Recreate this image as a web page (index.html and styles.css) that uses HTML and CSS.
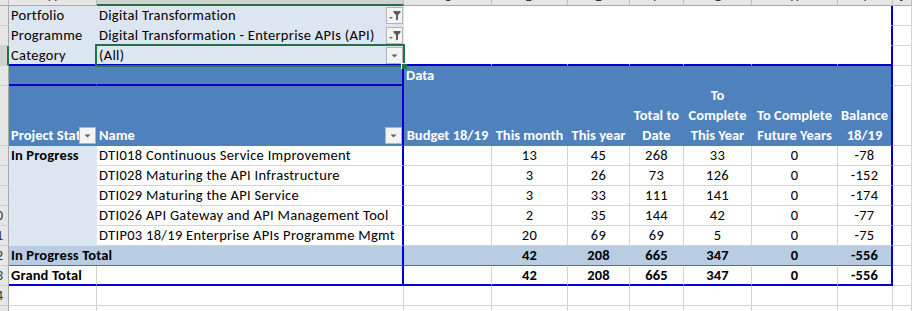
FILE: index.html
```html
<!DOCTYPE html>
<html lang="en">
<head>
    <meta charset="UTF-8">
    <meta content="width=device-width, initial-scale=1.0" name="viewport">
    <title>Enterprise APIs - Pivot</title>
    <link rel="stylesheet" href="styles.css">
</head>
<body>
<div class="sheet">
    <!-- column headings -->
    <div class="ch"></div>
    <div class="ch"><span>A</span></div>
    <div class="ch on"><span>B</span></div>
    <div class="ch"><span>C</span></div>
    <div class="ch"><span>D</span></div>
    <div class="ch"><span>E</span></div>
    <div class="ch"><span>F</span></div>
    <div class="ch"><span>G</span></div>
    <div class="ch"><span>H</span></div>
    <div class="ch"><span>I</span></div>
    <div class="ch"><span>J</span></div>

    <!-- report filters -->
    <div class="rh"><span>2</span></div>
    <div class="c flt">Portfolio</div>
    <div class="c flt pick">
        <span class="txt">Digital Transformation</span>
        <span class="btn"><svg width="15" height="15" viewBox="0 0 15 15"><polygon points="2,9 6,9 4,11" fill="#6a6a6a"/><polygon points="6.5,3 13.5,3 13.5,4.5 11,7 11,11.5 9,12.5 9,7 6.5,4.5" fill="#5c5c5c"/></svg></span>
    </div>
    <div class="c nb"></div>
    <div class="c nb"></div>
    <div class="c nb"></div>
    <div class="c nb"></div>
    <div class="c nb"></div>
    <div class="c nb"></div>
    <div class="c nb er"></div>
    <div class="c"></div>

    <div class="rh"><span>3</span></div>
    <div class="c flt">Programme</div>
    <div class="c flt pick">
        <span class="txt">Digital Transformation - Enterprise APIs (API)</span>
        <span class="btn"><svg width="15" height="15" viewBox="0 0 15 15"><polygon points="2,9 6,9 4,11" fill="#6a6a6a"/><polygon points="6.5,3 13.5,3 13.5,4.5 11,7 11,11.5 9,12.5 9,7 6.5,4.5" fill="#5c5c5c"/></svg></span>
    </div>
    <div class="c nb"></div>
    <div class="c nb"></div>
    <div class="c nb"></div>
    <div class="c nb"></div>
    <div class="c nb"></div>
    <div class="c nb"></div>
    <div class="c nb er"></div>
    <div class="c"></div>

    <div class="rh on"><span>4</span></div>
    <div class="c flt lb">Category</div>
    <div class="c flt pick lb active">
        <span class="txt">(All)</span>
        <span class="btn"><svg width="15" height="15" viewBox="0 0 15 15"><polygon points="4.5,6.5 10.5,6.5 7.5,9.5" fill="#5c5c5c"/></svg></span>
        <div class="sel"><div class="handle"></div></div>
    </div>
    <div class="c nb lb"></div>
    <div class="c nb lb"></div>
    <div class="c nb lb"></div>
    <div class="c nb lb"></div>
    <div class="c nb lb"></div>
    <div class="c nb lb"></div>
    <div class="c nb lb er"></div>
    <div class="c"></div>

    <!-- pivot header -->
    <div class="rh"><span>5</span></div>
    <div class="c hd lb"></div>
    <div class="c hd lb er"></div>
    <div class="c hd">Data</div>
    <div class="c hd"></div>
    <div class="c hd"></div>
    <div class="c hd"></div>
    <div class="c hd"></div>
    <div class="c hd"></div>
    <div class="c hd er"></div>
    <div class="c"></div>

    <div class="rh"><span>6</span></div>
    <div class="c hd cap pick">
        <span class="txt">Project Status</span>
        <span class="btn"><svg width="15" height="15" viewBox="0 0 15 15"><polygon points="4.5,6.5 10.5,6.5 7.5,9.5" fill="#5c5c5c"/></svg></span>
    </div>
    <div class="c hd cap pick er">
        <span class="txt">Name</span>
        <span class="btn"><svg width="15" height="15" viewBox="0 0 15 15"><polygon points="4.5,6.5 10.5,6.5 7.5,9.5" fill="#5c5c5c"/></svg></span>
    </div>
    <div class="c hd cap mid">Budget 18/19</div>
    <div class="c hd cap mid">This month</div>
    <div class="c hd cap mid">This year</div>
    <div class="c hd cap mid">Total to<br>Date</div>
    <div class="c hd cap mid">To<br>Complete<br>This Year</div>
    <div class="c hd cap mid">To Complete<br>Future Years</div>
    <div class="c hd cap mid er">Balance<br>18/19</div>
    <div class="c"></div>

    <!-- rows -->
    <div class="rh"><span>7</span></div>
    <div class="c grp b">In Progress</div>
    <div class="c er">DTI018 Continuous Service Improvement</div>
    <div class="c"></div>
    <div class="c num">13</div>
    <div class="c num">45</div>
    <div class="c num">268</div>
    <div class="c num">33</div>
    <div class="c num">0</div>
    <div class="c num er">-78</div>
    <div class="c"></div>

    <div class="rh"><span>8</span></div>
    <div class="c grp"></div>
    <div class="c er">DTI028 Maturing the API Infrastructure</div>
    <div class="c"></div>
    <div class="c num">3</div>
    <div class="c num">26</div>
    <div class="c num">73</div>
    <div class="c num">126</div>
    <div class="c num">0</div>
    <div class="c num er">-152</div>
    <div class="c"></div>

    <div class="rh"><span>9</span></div>
    <div class="c grp"></div>
    <div class="c er">DTI029 Maturing the API Service</div>
    <div class="c"></div>
    <div class="c num">3</div>
    <div class="c num">33</div>
    <div class="c num">111</div>
    <div class="c num">141</div>
    <div class="c num">0</div>
    <div class="c num er">-174</div>
    <div class="c"></div>

    <div class="rh"><span>10</span></div>
    <div class="c grp"></div>
    <div class="c er">DTI026 API Gateway and API Management Tool</div>
    <div class="c"></div>
    <div class="c num">2</div>
    <div class="c num">35</div>
    <div class="c num">144</div>
    <div class="c num">42</div>
    <div class="c num">0</div>
    <div class="c num er">-77</div>
    <div class="c"></div>

    <div class="rh"><span>11</span></div>
    <div class="c grp"></div>
    <div class="c er">DTIP03 18/19 Enterprise APIs Programme Mgmt</div>
    <div class="c"></div>
    <div class="c num">20</div>
    <div class="c num">69</div>
    <div class="c num">69</div>
    <div class="c num">5</div>
    <div class="c num">0</div>
    <div class="c num er">-75</div>
    <div class="c"></div>

    <div class="rh"><span>12</span></div>
    <div class="c tot b wide er">In Progress Total</div>
    <div class="c tot"></div>
    <div class="c tot num b">42</div>
    <div class="c tot num b">208</div>
    <div class="c tot num b">665</div>
    <div class="c tot num b">347</div>
    <div class="c tot num b">0</div>
    <div class="c tot num b er">-556</div>
    <div class="c"></div>

    <div class="rh"><span>13</span></div>
    <div class="c b lb">Grand Total</div>
    <div class="c lb er"></div>
    <div class="c lb"></div>
    <div class="c num b lb">42</div>
    <div class="c num b lb">208</div>
    <div class="c num b lb">665</div>
    <div class="c num b lb">347</div>
    <div class="c num b lb">0</div>
    <div class="c num b lb er">-556</div>
    <div class="c"></div>

    <div class="rh"><span>14</span></div>
    <div class="c"></div>
    <div class="c"></div>
    <div class="c"></div>
    <div class="c"></div>
    <div class="c"></div>
    <div class="c"></div>
    <div class="c"></div>
    <div class="c"></div>
    <div class="c"></div>
    <div class="c"></div>

    <div class="rh"><span>15</span></div>
    <div class="c"></div>
    <div class="c"></div>
    <div class="c"></div>
    <div class="c"></div>
    <div class="c"></div>
    <div class="c"></div>
    <div class="c"></div>
    <div class="c"></div>
    <div class="c"></div>
    <div class="c"></div>
</div>
</body>
</html>
```

FILE: styles.css
```css
body {
    margin: 0;
    font-family: Calibri, Carlito, Lato, sans-serif;
    font-size: 14px;
    color: #000;
    background: #fff;
    overflow: hidden;
}

.sheet {
    display: grid;
    grid-template-columns: 9px 88px 307px 88px 76px 62px 54px 68px 86px 55px 1fr;
    grid-template-rows: 6px repeat(4, 20px) 60px repeat(9, 20px);
}

/* headings */
.ch {
    box-sizing: border-box;
    background: #e6e6e6;
    border-right: 1px solid #bdbdbd;
    border-bottom: 1px solid #a8a8a8;
    display: flex;
    justify-content: center;
    align-items: flex-end;
    overflow: hidden;
    font-size: 14px;
    line-height: 14px;
    color: #333;
}

.ch span {
    margin-bottom: 1px;
}

.ch.on {
    background: #d2d2d2;
    border-bottom: 2px solid #217346;
}

.rh {
    box-sizing: border-box;
    background: #e6e6e6;
    border-right: 1px solid #a8a8a8;
    border-bottom: 1px solid #cfcfcf;
    overflow: hidden;
    line-height: 19px;
    color: #333;
}

.rh span {
    display: block;
    width: 16px;
    margin-left: -12px;
    text-align: center;
}

.rh.on {
    background: #d2d2d2;
    border-right: 2px solid #217346;
}

/* cells */
.c {
    box-sizing: border-box;
    border-right: 1px solid #d4d4d4;
    border-bottom: 1px solid #d4d4d4;
    padding: 0 2px;
    font-size: 14.5px;
    letter-spacing: 0.3px;
    line-height: 19px;
    white-space: nowrap;
    overflow: hidden;
    background: #fff;
}

.num {
    text-align: center;
}

.b {
    font-weight: bold;
    letter-spacing: 0.15px;
}

.nb {
    border-color: #fff;
}

.flt {
    background: #dce6f1;
    border-color: #dce6f1;
}

.grp {
    background: #dce6f1;
    border-color: #dce6f1;
}

.hd {
    background: #4f81bd;
    border-color: #4f81bd;
    color: #fff;
    font-weight: bold;
    letter-spacing: 0;
}

.cap {
    display: flex;
    align-items: flex-end;
    line-height: 20px;
}

.mid {
    justify-content: center;
    text-align: center;
}

.tot {
    background: #b8cce4;
    border-right-color: #b8cce4;
    border-bottom-color: #4a6fa5;
}

.wide {
    grid-column: span 2;
}

/* pivot outline */
.lb {
    border-bottom: 2px solid #0000cd;
}

.er {
    border-right: 2px solid #0000cd;
}

/* filter dropdowns */
.pick {
    display: flex;
    justify-content: space-between;
    align-items: center;
    padding-right: 0;
}

.cap.pick {
    align-items: flex-end;
}

.pick .txt {
    overflow: hidden;
    flex: 1 1 auto;
    min-width: 0;
}

.btn {
    box-sizing: border-box;
    flex: 0 0 17px;
    width: 17px;
    height: 17px;
    border: 1px solid #b4b4b4;
    background: #f4f4f4;
    display: flex;
    align-items: center;
    justify-content: center;
}

.cap .btn {
    margin-bottom: 1px;
}

.btn svg {
    display: block;
}

/* active cell */
.active {
    position: relative;
    overflow: visible;
}

.sel {
    position: absolute;
    top: -2px;
    left: -2px;
    right: -2px;
    bottom: -3px;
    border: 2px solid #217346;
}

.handle {
    position: absolute;
    right: -4px;
    bottom: -4px;
    width: 5px;
    height: 5px;
    background: #217346;
    border-left: 1px solid #fff;
    border-top: 1px solid #fff;
}
```
